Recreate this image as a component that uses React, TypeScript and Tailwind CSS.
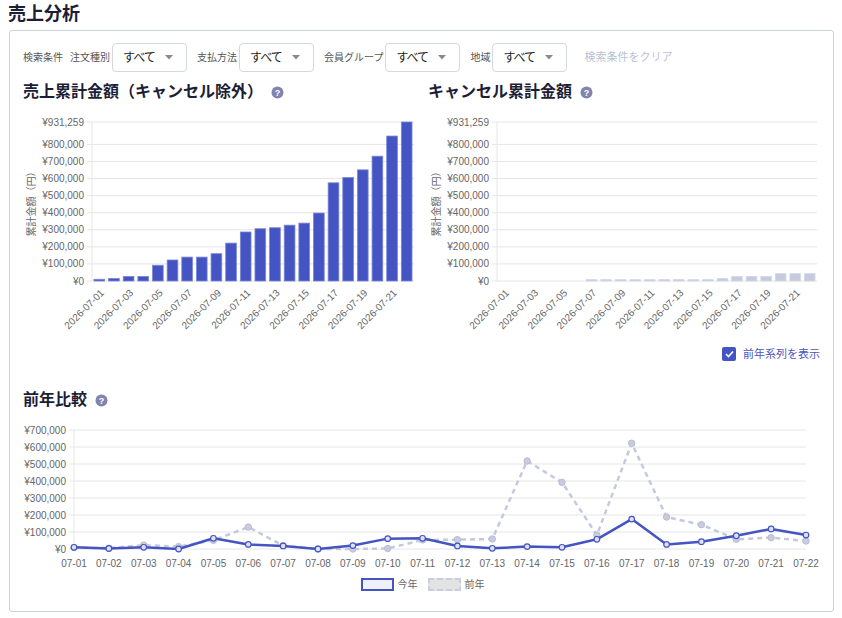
const SALES_CUM = [
  10000, 15000, 27000, 27000, 92000, 123000, 140000, 140000, 160000, 222000, 287000,
  306000, 312000, 327000, 339000, 398000, 575000, 606000, 651000, 731000, 849000, 931259,
]
const CANCEL_CUM = [
  0, 0, 0, 0, 0, 0, 8000, 8000, 8000, 8000, 8000, 8000, 8000, 8000, 8000, 14000, 27000,
  27000, 27000, 43000, 43000, 43000,
]
const THIS_YEAR = [10, 3, 10, 0, 63, 27, 18, 0, 20, 61, 63, 18, 4, 14, 10, 57, 176, 27, 43, 78, 118, 82].map(
  (v) => v * 1000,
)
const LAST_YEAR = [8, 5, 23, 14, 51, 129, 20, 0, 0, 3, 53, 55, 59, 518, 392, 82, 622, 188, 143, 57, 67, 47].map(
  (v) => v * 1000,
)
const DAYS = Array.from({ length: 22 }, (_, i) => `07-${String(i + 1).padStart(2, '0')}`)

const yen = (v: number) => '¥' + v.toLocaleString('en-US')

function HelpIcon() {
  return (
    <svg width="13" height="13" viewBox="0 0 13 13" className="shrink-0">
      <circle cx="6.5" cy="6.5" r="6" fill="#8084ae" />
      <text x="6.5" y="9.6" textAnchor="middle" fontSize="9" fontWeight="700" fill="#fff">
        ?
      </text>
    </svg>
  )
}

function Select({ label }: { label: string }) {
  return (
    <div className="flex items-center gap-[2px]">
      <span className="text-[10px] text-[#555]">{label}</span>
      <div className="flex h-[29px] w-[75px] items-center justify-between rounded-[4px] border border-[#d3d7e0] pl-[10px] pr-[13px]">
        <span className="text-[12px] tracking-[-1px] text-[#222]">すべて</span>
        <svg width="8" height="5" viewBox="0 0 8 5">
          <path d="M0 0 L8 0 L4 4.5 Z" fill="#8a8a8a" />
        </svg>
      </div>
    </div>
  )
}

function BarChart({
  width,
  plotRight,
  values,
  color,
  stroke,
}: {
  width: number
  plotRight: number
  values: number[]
  color: string
  stroke: string
}) {
  const L = 69
  const T = 12
  const B = 171
  const max = 931259
  const slot = (plotRight - L) / values.length
  const y = (v: number) => B - (v / max) * (B - T)
  const ticks = [0, 100000, 200000, 300000, 400000, 500000, 600000, 700000, 800000, max]
  return (
    <svg width={width} height={235} className="block">
      {ticks.map((t) => (
        <g key={t}>
          <line x1={L - 5} x2={plotRight} y1={y(t)} y2={y(t)} stroke="#e6e6e6" strokeWidth="1" />
          <text x={L - 8} y={y(t) + 3.5} textAnchor="end" fontSize="10" fill="#666">
            {yen(t)}
          </text>
        </g>
      ))}
      <line x1={L} x2={L} y1={T} y2={B} stroke="#e6e6e6" strokeWidth="1" />
      <text
        x={8}
        y={(T + B) / 2}
        transform={`rotate(-90 8 ${(T + B) / 2})`}
        textAnchor="middle"
        dominantBaseline="central"
        fontSize="10"
        fill="#666"
      >
        累計金額（円）
      </text>
      {values.map((v, i) => {
        const bw = slot * 0.73
        const cx = L + slot * (i + 0.5)
        const h = B - y(v)
        return h > 0 ? (
          <rect key={i} x={cx - bw / 2} y={y(v)} width={bw} height={h} fill={color} stroke={stroke} strokeWidth="0.8" />
        ) : null
      })}
      {values.map((_, i) => {
        if (i % 2) return null
        const cx = L + slot * (i + 0.5) + 3
        const ly = B + 10
        return (
          <text
            key={i}
            x={cx}
            y={ly}
            dy="0.35em"
            transform={`rotate(-45 ${cx} ${ly})`}
            textAnchor="end"
            fontSize="10"
            fill="#666"
          >
            2026-{DAYS[i]}
          </text>
        )
      })}
    </svg>
  )
}

function LineChart() {
  const L = 51
  const R = 783
  const T = 10
  const B = 129
  const max = 700000
  const x = (i: number) => L + ((R - L) * i) / 21
  const y = (v: number) => B - (v / max) * (B - T)
  const ticks = [0, 100000, 200000, 300000, 400000, 500000, 600000, 700000]
  const path = (vals: number[]) => vals.map((v, i) => `${i ? 'L' : 'M'}${x(i)} ${y(v)}`).join(' ')
  return (
    <svg width={799} height={152} className="block">
      {ticks.map((t) => (
        <g key={t}>
          <line x1={L - 5} x2={R} y1={y(t)} y2={y(t)} stroke="#e6e6e6" strokeWidth="1" />
          <text x={L - 8} y={y(t) + 3.5} textAnchor="end" fontSize="10" fill="#666">
            {yen(t)}
          </text>
        </g>
      ))}
      <line x1={L} x2={L} y1={T} y2={B} stroke="#e6e6e6" strokeWidth="1" />
      {DAYS.map((d, i) => (
        <text key={d} x={x(i)} y={B + 18} textAnchor="middle" fontSize="10" fill="#666">
          {d}
        </text>
      ))}
      <path d={path(LAST_YEAR)} fill="none" stroke="#c5c9dd" strokeWidth="2.5" strokeDasharray="5 4" />
      {LAST_YEAR.map((v, i) => (
        <circle key={i} cx={x(i)} cy={y(v)} r="3.2" fill="#c9cce0" stroke="#b9bdd3" strokeWidth="1" />
      ))}
      <path d={path(THIS_YEAR)} fill="none" stroke="#4454c3" strokeWidth="2.5" strokeLinejoin="round" />
      {THIS_YEAR.map((v, i) => (
        <circle key={i} cx={x(i)} cy={y(v)} r="2.8" fill="#dfe2f5" stroke="#4454c3" strokeWidth="1.2" />
      ))}
    </svg>
  )
}

export default function App() {
  return (
    <div className="h-[618px] w-[842px] overflow-hidden bg-white font-['Liberation_Sans','Noto_Sans_CJK_JP',sans-serif] text-[#1c1e36]">
      <h1 className="h-[30px] pl-[8px] pt-[1px] text-[18px] font-bold leading-[26px]">売上分析</h1>
      <div className="ml-[9px] h-[582px] w-[825px] rounded-[3px] border border-[#cbd0db] px-[13px] pt-[12px]">
        <div className="flex h-[29px] items-center">
          <span className="mr-[7px] text-[10px] text-[#555]">検索条件</span>
          <div className="flex items-center gap-[10px]">
            <Select label="注文種別" />
            <Select label="支払方法" />
            <Select label="会員グループ" />
            <Select label="地域" />
          </div>
          <span className="ml-[17px] text-[11px] text-[#b9bfd3]">検索条件をクリア</span>
        </div>

        <div className="mt-[9px] flex">
          <div className="w-[407px]">
            <div className="flex h-[22px] items-center gap-[8px]">
              <h2 className="text-[16px] font-bold">売上累計金額（キャンセル除外）</h2>
              <HelpIcon />
            </div>
            <div className="mt-[7px]">
              <BarChart width={397} plotRight={391} values={SALES_CUM} color="#4454c3" stroke="#7b86d8" />
            </div>
          </div>
          <div className="w-[392px]">
            <div className="flex h-[22px] items-center gap-[8px]">
              <h2 className="text-[16px] font-bold">キャンセル累計金額</h2>
              <HelpIcon />
            </div>
            <div className="mt-[7px]">
              <BarChart width={392} plotRight={389} values={CANCEL_CUM} color="#c6cade" stroke="#d4d7e6" />
            </div>
            <div className="mt-[2px] flex h-[14px] items-center justify-end gap-[7px]">
              <span className="flex h-[14px] w-[14px] items-center justify-center rounded-[2px] bg-[#4454c3]">
                <svg width="9" height="8" viewBox="0 0 9 8">
                  <path d="M1 4 L3.5 6.5 L8 1.5" fill="none" stroke="#fff" strokeWidth="1.6" />
                </svg>
              </span>
              <span className="text-[11px] text-[#4a55bd]">前年系列を表示</span>
            </div>
          </div>
        </div>

        <div className="mt-[28px] flex h-[22px] items-center gap-[8px]">
          <h2 className="text-[16px] font-bold">前年比較</h2>
          <HelpIcon />
        </div>
        <div className="mt-[9px]">
          <LineChart />
        </div>
        <div className="mt-[6px] flex h-[13px] items-center justify-center gap-[4px] pl-[2px] text-[10px] text-[#666]">
          <span className="h-[13px] w-[33px] border-2 border-[#4454c3] bg-[#eef0fa]" />
          <span className="mr-[6px]">今年</span>
          <span className="h-[13px] w-[33px] border-2 border-dashed border-[#c9cde0] bg-[#e3e3e3]" />
          <span>前年</span>
        </div>
      </div>
    </div>
  )
}
